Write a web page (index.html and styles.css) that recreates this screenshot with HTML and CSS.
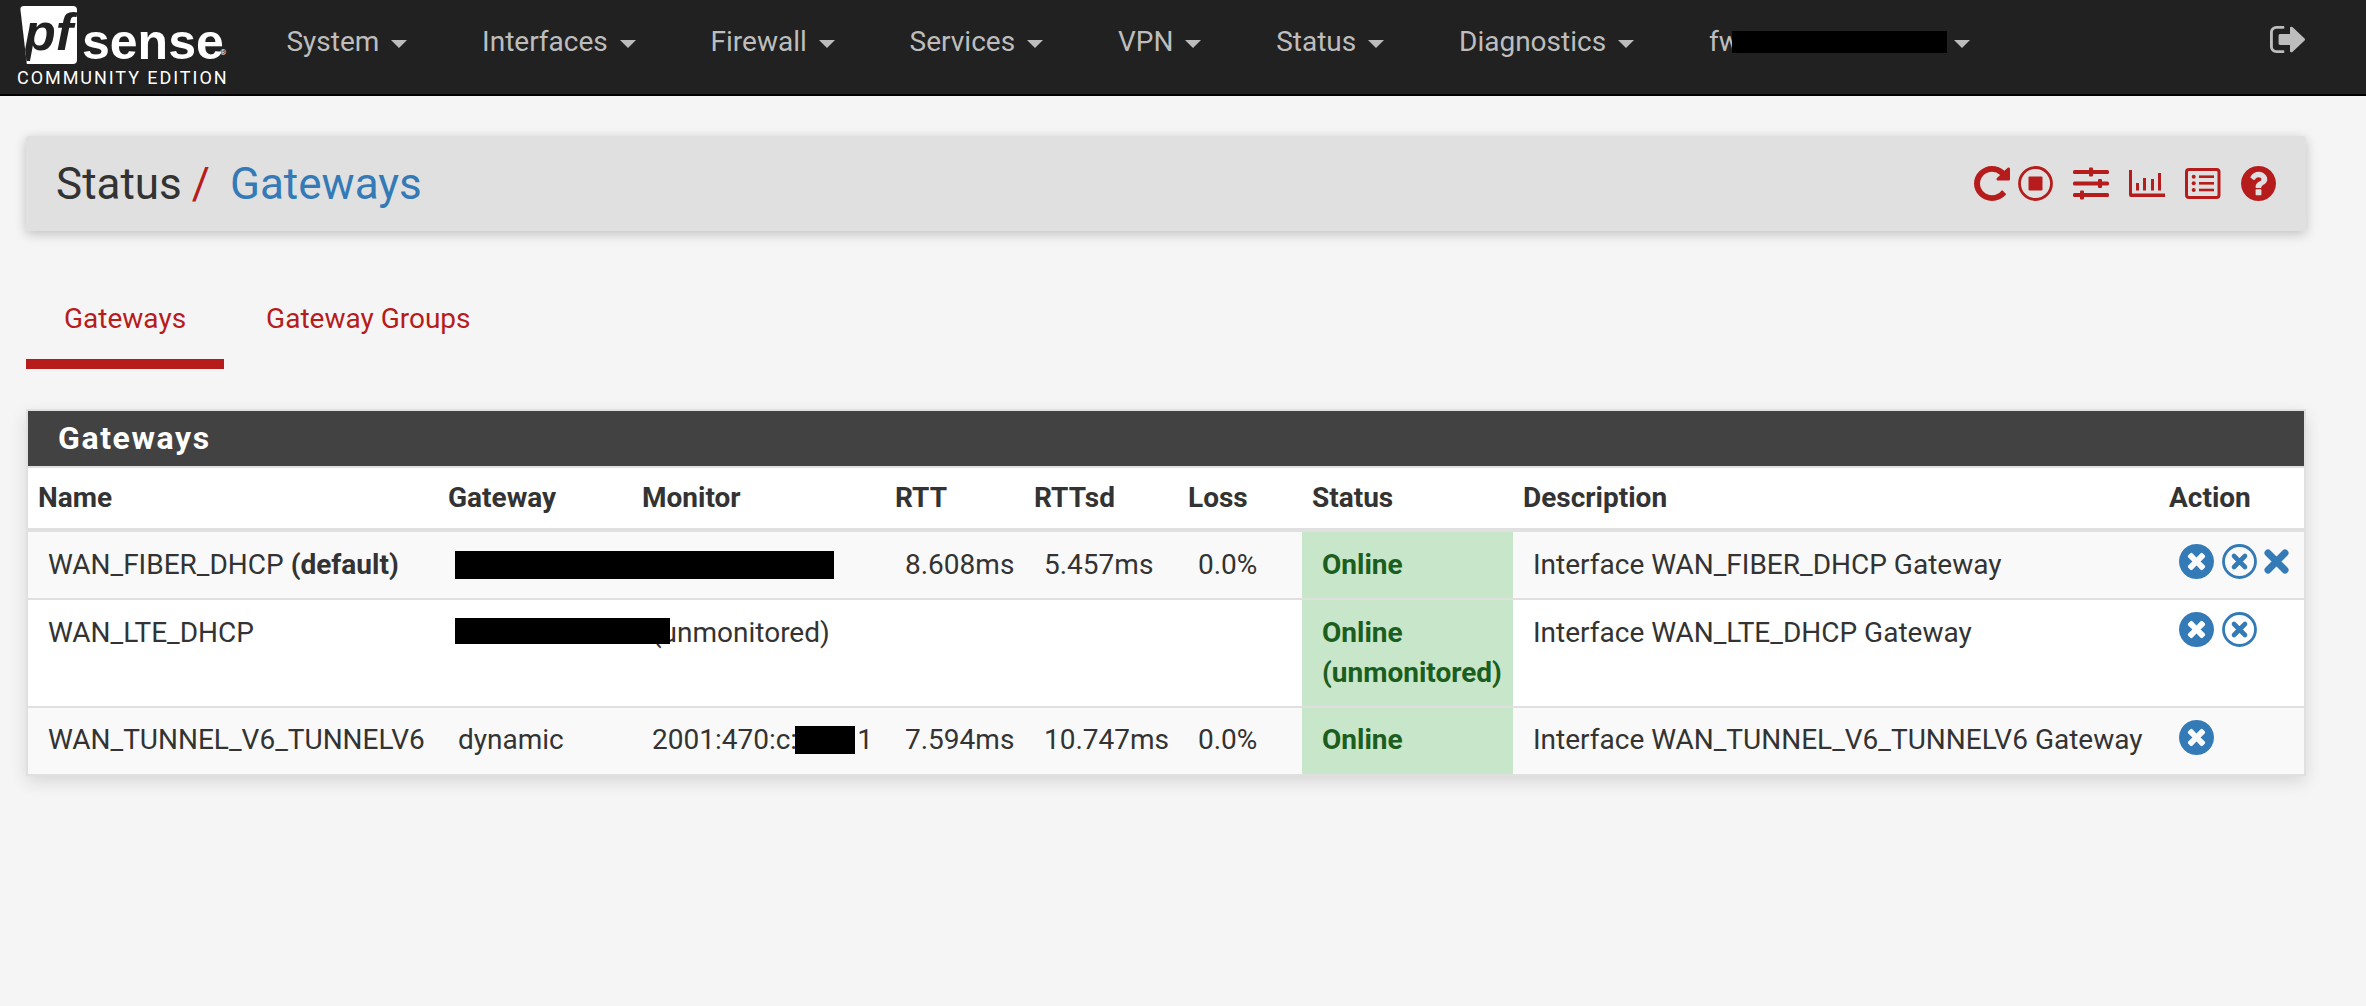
FILE: index.html
```html
<!DOCTYPE html>
<html lang="en">
<head>
<meta charset="utf-8">
<title>Status / Gateways</title>
<link rel="stylesheet" href="styles.css">
</head>
<body>
<svg class="defs" width="0" height="0" aria-hidden="true">
  <symbol id="i-circle-x" viewBox="128 128 1536 1536"><path d="M1277 1122q0-26-19-45l-181-181 181-181q19-19 19-45 0-27-19-46l-90-90q-19-19-46-19-26 0-45 19l-181 181-181-181q-19-19-45-19-27 0-46 19l-90 90q-19 19-19 46 0 26 19 45l181 181-181 181q-19 19-19 45 0 27 19 46l90 90q19 19 46 19 26 0 45-19l181-181 181 181q19 19 45 19 27 0 46-19l90-90q19-19 19-46zm387-226q0 209-103 385.5t-279.5 279.5-385.5 103-385.5-103-279.5-279.5-103-385.5 103-385.5 279.5-279.5 385.5-103 385.5 103 279.5 279.5 103 385.5z"/></symbol>
  <symbol id="i-ring-x" viewBox="0 0 35 35"><circle cx="17.5" cy="17.5" r="16" fill="none" stroke="currentColor" stroke-width="2.8"/><path d="M12 12l11 11M23 12l-11 11" fill="none" stroke="currentColor" stroke-width="4.6" stroke-linecap="round"/></symbol>
  <symbol id="i-x" viewBox="0 0 25 25"><path d="M4 4l17 17M21 4L4 21" fill="none" stroke="currentColor" stroke-width="7" stroke-linecap="round"/></symbol>
</svg>

<nav class="navbar">
  <a class="brand" href="#">
    <span class="brand-top">
      <span class="brand-pf">pf</span>
      <span class="brand-sense">sense</span>
      <span class="brand-reg">®</span>
    </span>
    <span class="brand-sub">COMMUNITY EDITION</span>
  </a>
  <ul class="menu">
    <li class="menu-item">System<span class="caret"></span></li>
    <li class="menu-item">Interfaces<span class="caret"></span></li>
    <li class="menu-item">Firewall<span class="caret"></span></li>
    <li class="menu-item">Services<span class="caret"></span></li>
    <li class="menu-item">VPN<span class="caret"></span></li>
    <li class="menu-item">Status<span class="caret"></span></li>
    <li class="menu-item">Diagnostics<span class="caret"></span></li>
    <li class="menu-item">fw<span class="nav-redact"></span><span class="caret caret-tight"></span></li>
  </ul>
  <a class="logout" href="#">
    <svg width="35" height="27" viewBox="64 256 1568 1280" preserveAspectRatio="none" fill="currentColor"><path d="M704 1440q0 4 1 20t.5 26.5-3 23.5-10 19.5-20.5 6.5h-320q-119 0-203.5-84.5t-84.5-203.5v-704q0-119 84.5-203.5t203.5-84.5h320q13 0 22.5 9.5t9.5 22.5q0 4 1 20t.5 26.5-3 23.5-10 19.5-20.5 6.5h-320q-66 0-113 47t-47 113v704q0 66 47 113t113 47h312l11.5 1 11.5 3 8 5.5 7 9 2 13.5zm928-544q0 26-19 45l-544 544q-19 19-45 19t-45-19-19-45v-288h-448q-26 0-45-19t-19-45v-384q0-26 19-45t45-19h448v-288q0-26 19-45t45-19 45 19l544 544q19 19 19 45z"/></svg>
  </a>
</nav>

<main class="page">
  <header class="page-head">
    <h1 class="crumbs"><span>Status</span><span class="crumb-sep">/</span><a class="crumb-link" href="#">Gateways</a></h1>
    <div class="tools">
      <svg class="tool tool-repeat" width="36" height="35" viewBox="128 128 1536 1536" preserveAspectRatio="none" fill="currentColor"><path d="M1664 256v448q0 26-19 45t-45 19h-448q-42 0-59-40-17-39 14-69l138-138q-148-137-349-137-104 0-198.5 40.5t-163.5 109.5-109.5 163.5-40.5 198.5 40.5 198.5 109.5 163.5 163.5 109.5 198.5 40.5q119 0 225-52t179-147q7-10 23-12 15 0 25 9l137 138q9 8 9.5 20.5t-7.5 22.5q-109 132-264 204.5t-327 72.5q-156 0-298-61t-245-164-164-245-61-298 61-298 164-245 245-164 298-61q147 0 284.5 55.5t244.5 156.5l130-129q29-31 70-14 39 17 39 59z"/></svg>
      <svg class="tool tool-stop" width="35" height="35" viewBox="0 0 35 35" fill="currentColor"><circle cx="17.5" cy="17.5" r="16" fill="none" stroke="currentColor" stroke-width="2.8"/><rect x="10.5" y="10.5" width="14" height="14" rx="1"/></svg>
      <svg class="tool tool-sliders" width="36" height="35" viewBox="0 0 36 35" fill="currentColor"><rect y="4" width="36" height="4" rx="1.5"/><rect x="16" y="1.5" width="4" height="9" rx="1"/><rect y="15.5" width="36" height="4" rx="1.5"/><rect x="25" y="13" width="4" height="9" rx="1"/><rect y="27" width="36" height="4" rx="1.5"/><rect x="7" y="24.5" width="4" height="9" rx="1"/></svg>
      <svg class="tool tool-chart" width="36" height="35" viewBox="0 0 36 35" fill="currentColor"><path d="M0 4h3v23.5h33V31H2a2 2 0 0 1-2-2z"/><rect x="7" y="17" width="3" height="7.5"/><rect x="14" y="12" width="3" height="12.5"/><rect x="22" y="13" width="3" height="11.5"/><rect x="29" y="7" width="3" height="17.5"/></svg>
      <svg class="tool tool-list" width="36" height="35" viewBox="0 0 36 35" fill="currentColor"><rect x="1.5" y="3.5" width="32.5" height="28" rx="2.5" fill="none" stroke="currentColor" stroke-width="3"/><circle cx="8.7" cy="10.7" r="2"/><circle cx="8.7" cy="17.3" r="2"/><circle cx="8.7" cy="24" r="2"/><rect x="14" y="9.4" width="15" height="2.6"/><rect x="14" y="16" width="15" height="2.6"/><rect x="14" y="22.7" width="15" height="2.6"/></svg>
      <svg class="tool tool-help" width="35" height="35" viewBox="128 128 1536 1536" fill="currentColor"><path d="M1024 1376v-192q0-14-9-23t-23-9h-192q-14 0-23 9t-9 23v192q0 14 9 23t23 9h192q14 0 23-9t9-23zm256-672q0-88-55.5-163t-138.5-116-170-41q-243 0-371 213-15 24 8 42l132 100q7 6 19 6 16 0 25-12 53-68 86-92 34-24 86-24 48 0 85.5 26t37.5 59q0 38-20 61t-68 45q-63 28-115.5 86.5t-52.5 125.5v36q0 14 9 23t23 9h192q14 0 23-9t9-23q0-19 21.5-49.5t54.5-49.5q32-18 49-28.5t46-35 44.5-48 28-60.5 12.5-81zm384 192q0 209-103 385.5t-279.5 279.5-385.5 103-385.5-103-279.5-279.5-103-385.5 103-385.5 279.5-279.5 385.5-103 385.5 103 279.5 279.5 103 385.5z"/></svg>
    </div>
  </header>

  <ul class="tabs">
    <li class="tab tab-active">Gateways</li>
    <li class="tab">Gateway Groups</li>
  </ul>

  <section class="panel">
    <h2 class="panel-title">Gateways</h2>
    <table class="grid">
      <colgroup>
        <col class="c-name"><col class="c-gw"><col class="c-mon"><col class="c-rtt"><col class="c-sd"><col class="c-loss"><col class="c-status"><col class="c-desc"><col class="c-act">
      </colgroup>
      <thead>
        <tr><th>Name</th><th>Gateway</th><th>Monitor</th><th>RTT</th><th>RTTsd</th><th>Loss</th><th>Status</th><th>Description</th><th>Action</th></tr>
      </thead>
      <tbody>
        <tr class="odd">
          <td>WAN_FIBER_DHCP <strong>(default)</strong></td>
          <td class="anchor"><span class="redact redact-a"></span></td>
          <td></td>
          <td>8.608ms</td><td>5.457ms</td><td>0.0%</td>
          <td class="online">Online</td>
          <td>Interface WAN_FIBER_DHCP Gateway</td>
          <td><div class="actions">
            <svg class="act" width="35" height="35"><use href="#i-circle-x"/></svg>
            <svg class="act" width="35" height="35"><use href="#i-ring-x"/></svg>
            <svg class="act act-x" width="25" height="25"><use href="#i-x"/></svg>
          </div></td>
        </tr>
        <tr>
          <td>WAN_LTE_DHCP</td>
          <td class="anchor"><span class="redact redact-b"></span></td>
          <td>(unmonitored)</td>
          <td></td><td></td><td></td>
          <td class="online">Online<br>(unmonitored)</td>
          <td>Interface WAN_LTE_DHCP Gateway</td>
          <td><div class="actions">
            <svg class="act" width="35" height="35"><use href="#i-circle-x"/></svg>
            <svg class="act" width="35" height="35"><use href="#i-ring-x"/></svg>
          </div></td>
        </tr>
        <tr class="odd last">
          <td>WAN_TUNNEL_V6_TUNNELV6</td>
          <td>dynamic</td>
          <td>2001:470:c:<span class="redact-inline"></span>1</td>
          <td>7.594ms</td><td>10.747ms</td><td>0.0%</td>
          <td class="online">Online</td>
          <td>Interface WAN_TUNNEL_V6_TUNNELV6 Gateway</td>
          <td><div class="actions">
            <svg class="act" width="35" height="35"><use href="#i-circle-x"/></svg>
          </div></td>
        </tr>
      </tbody>
    </table>
  </section>
</main>
</body>
</html>
```

FILE: styles.css
```css
* { box-sizing: border-box; }
html, body { margin: 0; padding: 0; }
body {
  background: #f5f5f5;
  color: #333;
  font-family: Roboto, "Liberation Sans", sans-serif;
  font-size: 28px;
  line-height: 40px;
  min-height: 1006px;
}
a { color: inherit; text-decoration: none; }
.defs { position: absolute; }

.navbar {
  display: flex;
  align-items: flex-start;
  height: 96px;
  background: #212121;
  border-bottom: 2px solid #000;
  color: #bdbdbd;
}
.brand {
  flex: none;
  width: 249px;
  padding: 6px 0 0 17px;
  display: flex;
  flex-direction: column;
  color: #fff;
}
.brand-top { position: relative; display: flex; height: 59px; }
.brand-pf {
  width: 57px;
  height: 58px;
  margin-left: 3px;
  background: #fff;
  color: #212121;
  font: italic 700 52px/53px "Liberation Sans", sans-serif;
  padding-left: 4px;
  clip-path: polygon(0 0, 100% 0, 100% 100%, 12% 100%);
  border-radius: 4px;
}
.brand-sense {
  margin-left: 5px;
  font: 700 50px/58px "Liberation Sans", sans-serif;
  padding-top: 7px;
  letter-spacing: 0;
}
.brand-reg {
  position: absolute;
  left: 203px;
  top: 42px;
  font-size: 8px;
  line-height: 10px;
}
.brand-sub {
  margin-top: 3px;
  font-size: 18px;
  line-height: 20px;
  letter-spacing: 1.95px;
  white-space: nowrap;
}
.menu {
  display: flex;
  list-style: none;
  margin: 0;
  padding: 22px 0 0;
  flex: 1;
}
.menu-item {
  display: flex;
  align-items: center;
  height: 40px;
  padding: 0 37.4px;
  white-space: nowrap;
}
.caret {
  width: 0;
  height: 0;
  margin-left: 12px;
  margin-top: 4px;
  border-left: 8px solid transparent;
  border-right: 8px solid transparent;
  border-top: 8px solid #bdbdbd;
}
.caret-tight { margin-left: 7px; }
.nav-redact {
  display: inline-block;
  width: 215px;
  height: 22px;
  margin-left: -8px;
  background: #000;
}
.logout { flex: none; margin: 26px 61px 0 0; height: 27px; }
.logout svg { display: block; }

.page { padding: 40px 60px 0 26px; }
.page-head {
  display: flex;
  justify-content: space-between;
  align-items: center;
  height: 95px;
  padding: 0 30px 0 30px;
  background: #e0e0e0;
  border-radius: 3px;
  box-shadow: 0 3px 12px rgba(0, 0, 0, .22);
}
.crumbs {
  margin: 0;
  font-size: 44px;
  font-weight: 400;
  line-height: 60px;
  display: flex;
}
.crumb-sep { color: #b71c1c; margin: 0 20px 0 10px; }
.crumb-link { color: #337ab7; }
.tools { display: flex; color: #b71c1c; }
.tool { flex: none; display: block; }
.tool-repeat { margin-right: 8px; }
.tool-stop { margin-right: 20px; }
.tool-sliders { margin-right: 20px; }
.tool-chart { margin-right: 20px; }
.tool-list { margin-right: 20px; }

.tabs {
  display: flex;
  gap: 4px;
  list-style: none;
  margin: 68px 0 40px;
  padding: 0;
}
.tab {
  padding: 0 38px 20px;
  color: #b71c1c;
  border-bottom: 10px solid transparent;
  white-space: nowrap;
}
.tab-active { border-bottom-color: #b71c1c; }

.panel {
  border: 2px solid #e0e0e0;
  background: #fff;
  box-shadow: 0 6px 16px rgba(0, 0, 0, .12);
}
.panel-title {
  margin: 0;
  height: 57px;
  padding: 0 0 0 30px;
  background: #424242;
  border-bottom: 2px solid #e0e0e0;
  color: #fff;
  font-size: 32px;
  font-weight: 700;
  line-height: 55px;
  letter-spacing: 1.6px;
}
.grid {
  width: 100%;
  table-layout: fixed;
  border-collapse: separate;
  border-spacing: 0;
}
.c-name { width: 410px; }
.c-gw { width: 194px; }
.c-mon { width: 253px; }
.c-rtt { width: 139px; }
.c-sd { width: 154px; }
.c-loss { width: 124px; }
.c-status { width: 211px; }
.c-desc { width: 646px; }
.c-act { width: 145px; }

.grid th {
  height: 64px;
  padding: 0 10px;
  text-align: left;
  font-weight: 700;
  white-space: nowrap;
  border-bottom: 4px solid #e0e0e0;
}
.grid td {
  padding: 13px 0 13px 20px;
  vertical-align: top;
  white-space: nowrap;
  border-bottom: 2px solid #e0e0e0;
}
.grid tr.last td { border-bottom: 0; padding: 12px 0 14px 20px; }
.grid tr.odd td { background: #f9f9f9; }
.grid td.online,
.grid tr.odd td.online {
  background: #c8e6c9;
  color: #1b5e20;
  font-weight: 700;
}
.anchor { position: relative; }
.redact { position: absolute; left: 17px; background: #000; }
.redact-a { top: 19px; width: 379px; height: 28px; }
.redact-b { top: 18px; width: 215px; height: 26px; }
.redact-inline {
  display: inline-block;
  width: 60px;
  height: 28px;
  margin: 0 2px 0 -2px;
  background: #000;
  vertical-align: -5px;
}
.actions { display: flex; align-items: center; gap: 8px; margin-top: -1px; color: #337ab7; }
.last .actions { margin-top: 0; }
.act { flex: none; display: block; fill: currentColor; }
.act-x { margin-left: -1px; }
```
